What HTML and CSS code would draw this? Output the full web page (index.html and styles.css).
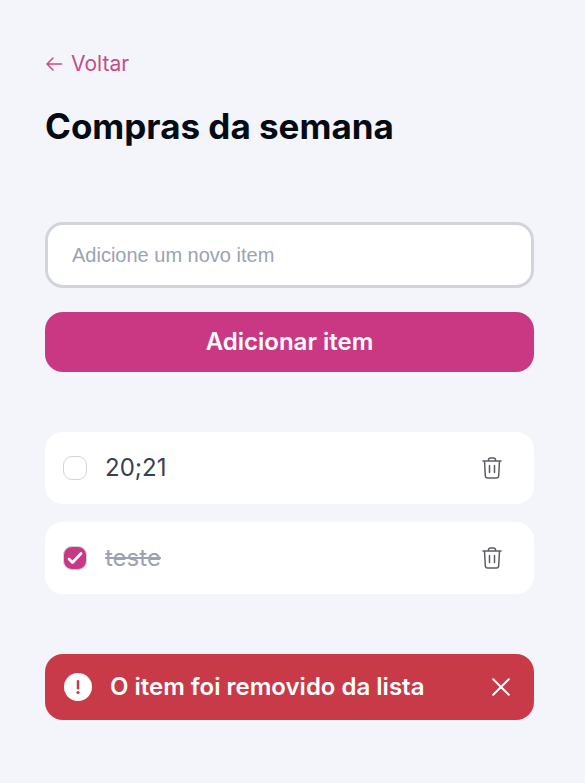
FILE: index.html
```html
<!DOCTYPE html>
<html lang="pt-BR">
<head>
  <meta charset="utf-8">
  <meta name="viewport" content="width=device-width, initial-scale=1">
  <title>Compras da semana</title>
  <link rel="stylesheet" href="styles.css">
</head>
<body>
  <main class="page">
    <a class="back" href="#">
      <svg class="back-icon" viewBox="0 0 18 18" aria-hidden="true"><path d="M16.500 9H2M8 3L2 9l6 6"/></svg>
      Voltar
    </a>
    <h1 class="title">Compras da semana</h1>

    <form class="form">
      <input class="field" type="text" placeholder="Adicione um novo item" aria-label="Adicione um novo item">
      <button class="submit" type="submit">Adicionar item</button>
    </form>

    <ul class="list">
      <li class="item">
        <input class="check" type="checkbox" id="item-1">
        <label class="label" for="item-1">20;21</label>
        <button class="icon-button" type="button" aria-label="Remover 20;21">
          <svg class="trash" viewBox="0 0 24 24" aria-hidden="true"><path d="M3 5h18M8.500 5V4q0-2 2-2h3q2 0 2 2v1M4.500 5l.8 14.800q.2 2.200 2.300 2.200h8.800q2.100 0 2.300-2.200l.8-14.800M9.500 9.500v7M14.500 9.500v7"/></svg>
        </button>
      </li>
      <li class="item">
        <input class="check" type="checkbox" id="item-2" checked>
        <label class="label" for="item-2">teste</label>
        <button class="icon-button" type="button" aria-label="Remover teste">
          <svg class="trash" viewBox="0 0 24 24" aria-hidden="true"><path d="M3 5h18M8.500 5V4q0-2 2-2h3q2 0 2 2v1M4.500 5l.8 14.800q.2 2.200 2.300 2.200h8.800q2.100 0 2.300-2.200l.8-14.800M9.500 9.500v7M14.500 9.500v7"/></svg>
        </button>
      </li>
    </ul>

    <div class="toast" role="alert">
      <svg class="alert-icon" viewBox="0 0 28 28" aria-hidden="true">
        <circle class="alert-disc" cx="14" cy="14" r="14"/>
        <path class="alert-mark" d="M14 8.200v7"/>
        <circle class="alert-dot" cx="14" cy="19.500" r="1.600"/>
      </svg>
      <p class="toast-text">O item foi removido da lista</p>
      <button class="icon-button" type="button" aria-label="Fechar">
        <svg class="close" viewBox="0 0 18 18" aria-hidden="true"><path d="M1.200 1.200l15.600 15.600M16.800 1.200L1.200 16.800"/></svg>
      </button>
    </div>
  </main>
</body>
</html>
```
FILE: styles.css
```css
* {
  box-sizing: border-box;
}

body {
  margin: 0;
  background: #f3f5fb;
  color: #050b12;
  font-family: Inter, "Liberation Sans", sans-serif;
}

.page {
  padding: 48px 51px 48px 45px;
}

.back {
  display: flex;
  align-items: center;
  gap: 8px;
  width: fit-content;
  color: #c74b88;
  font-size: 21px;
  font-weight: 400;
  line-height: 32px;
  text-decoration: none;
}

.back-icon {
  width: 18px;
  height: 18px;
  fill: none;
  stroke: currentColor;
  stroke-width: 1.5;
  stroke-linecap: round;
  stroke-linejoin: round;
}

.title {
  margin: 24px 0 0;
  font-size: 35px;
  font-weight: 700;
  line-height: 44px;
}

.form {
  display: flex;
  flex-direction: column;
  gap: 24px;
  margin-top: 74px;
}

.field {
  width: 100%;
  height: 66px;
  padding: 0 24px;
  border: 3px solid #d1d5db;
  border-radius: 18px;
  background: #fff;
  color: #374151;
  font-family: "Liberation Sans", Arial, sans-serif;
  font-size: 20px;
}

.field::placeholder {
  color: #9ca3af;
  opacity: 1;
}

.submit {
  height: 60px;
  padding: 0 0 2px;
  border: 0;
  border-radius: 18px;
  background: #ca3884;
  color: #fff;
  font-family: inherit;
  font-size: 24px;
  font-weight: 600;
}

.list {
  display: flex;
  flex-direction: column;
  gap: 18px;
  margin: 60px 0;
  padding: 0;
  list-style: none;
}

.item {
  display: flex;
  align-items: center;
  gap: 18px;
  height: 72px;
  padding: 0 30px 0 18px;
  border-radius: 18px;
  background: #fff;
}

.check {
  appearance: none;
  width: 24px;
  height: 24px;
  margin: 0;
  border: 1px solid #d1d5db;
  border-radius: 9px;
  background: #fff;
}

.check:checked {
  background: #ca3884 url("data:image/svg+xml,%3Csvg xmlns='http://www.w3.org/2000/svg' viewBox='0 0 22 22'%3E%3Cpath d='M5 12l3.500 3.500L17 6.500' fill='none' stroke='white' stroke-width='2.800' stroke-linecap='round' stroke-linejoin='round'/%3E%3C/svg%3E") center / 22px no-repeat;
}

.label {
  flex: 1;
  color: #374151;
  font-size: 24px;
  line-height: 36px;
}

.check:checked + .label {
  color: #9ca3af;
  text-decoration: line-through;
}

.icon-button {
  display: flex;
  padding: 0;
  border: 0;
  background: none;
  color: inherit;
}

.trash,
.close {
  fill: none;
  stroke: currentColor;
  stroke-width: 1.5;
  stroke-linecap: round;
  stroke-linejoin: round;
}

.trash {
  width: 24px;
  height: 24px;
  color: #5c5c66;
}

.toast {
  display: flex;
  align-items: center;
  gap: 18px;
  height: 66px;
  padding: 0 24px 0 19px;
  border-radius: 18px;
  background: #c83a47;
  color: #fff;
}

.alert-icon {
  width: 28px;
  height: 28px;
}

.alert-disc {
  fill: #fff;
}

.alert-mark {
  stroke: #c83a47;
  stroke-width: 2.5;
  stroke-linecap: round;
}

.alert-dot {
  fill: #c83a47;
}

.toast-text {
  flex: 1;
  margin: 0;
  font-size: 24px;
  font-weight: 600;
  line-height: 36px;
}

.close {
  width: 18px;
  height: 18px;
  stroke-width: 2;
}
```
